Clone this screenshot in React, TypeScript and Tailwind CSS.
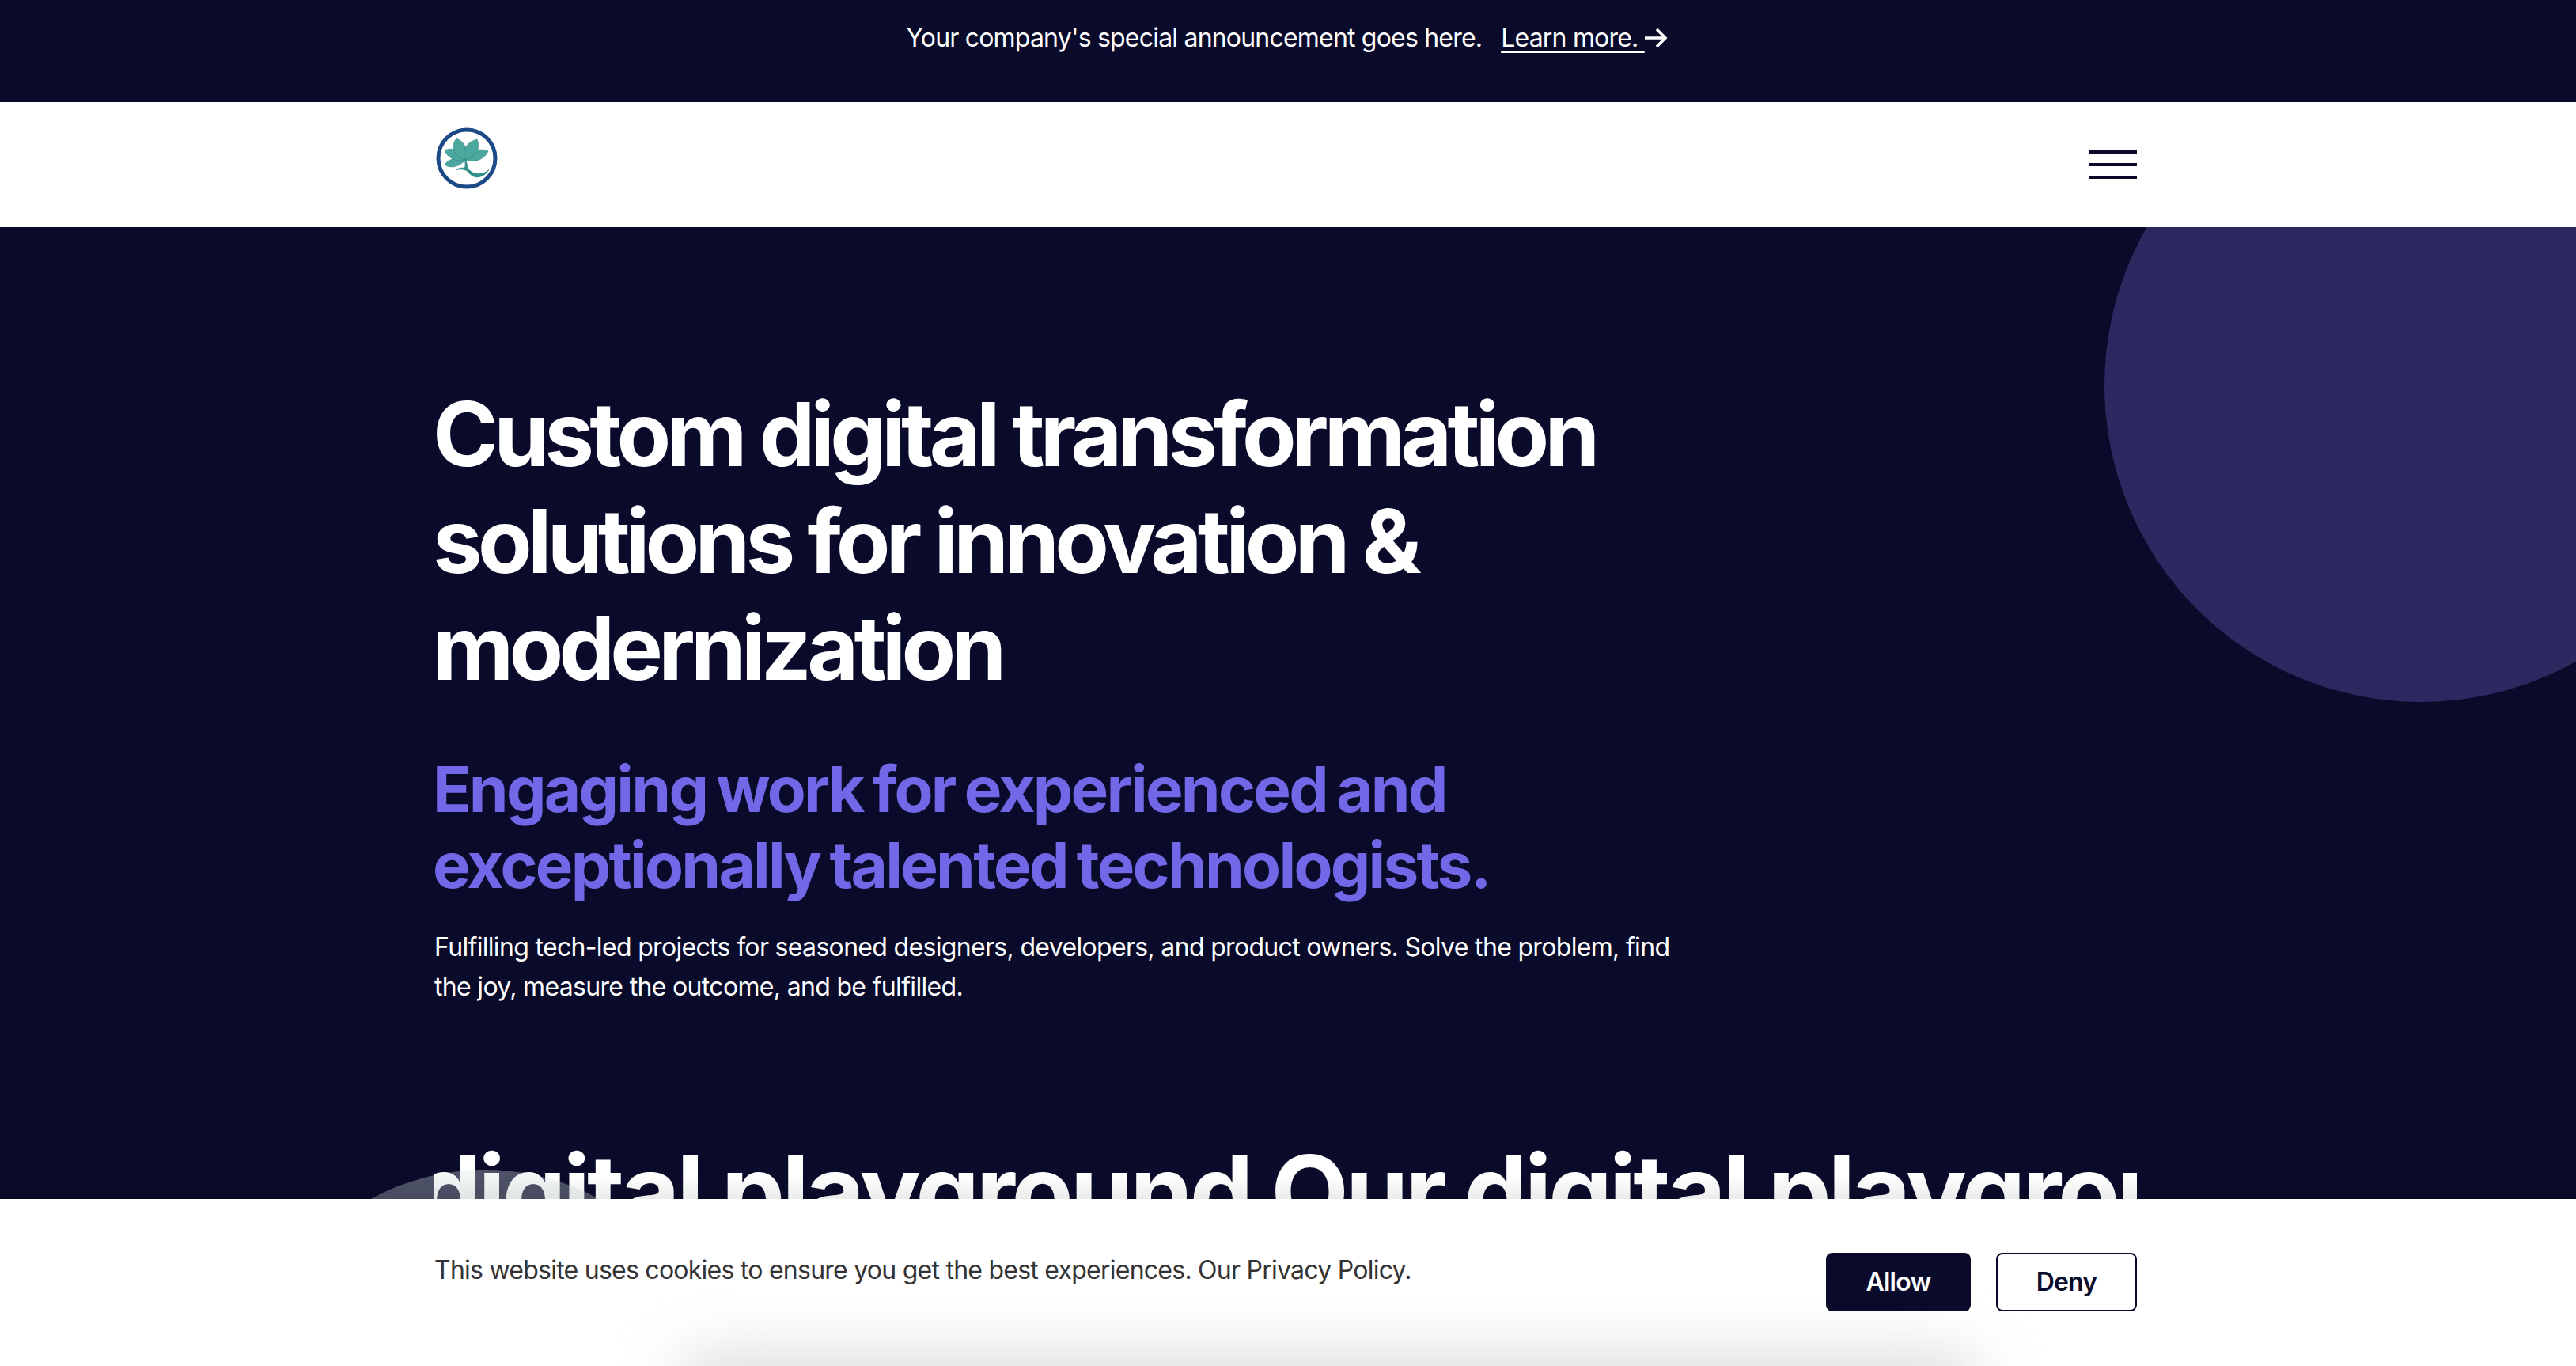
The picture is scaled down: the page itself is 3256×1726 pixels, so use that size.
import React from "react";

function Logo() {
  return (
    <svg width="80" height="80" viewBox="0 0 80 80" aria-label="logo" className="ml-[1px]">
      <circle cx="40" cy="40" r="36" fill="#fff" stroke="#1c4a86" strokeWidth="5" />
      <g fill="#4aa89f" stroke="#2f7f7a" strokeWidth="0.5">
        <path d="M12 48 C18 40 28 38 38 42 C32 50 20 54 12 48Z" />
        <path d="M12 30 C22 25 34 31 38 42 C27 45 16 40 12 30Z" />
        <path d="M67 31 C56 26 43 31 38 42 C50 46 62 42 67 31Z" />
        <path d="M27 15 C19 24 24 38 38 42 C42 30 38 19 27 15Z" />
        <path d="M53 16 C58 27 52 39 38 42 C33 29 41 19 53 16Z" />
      </g>
      <path d="M37 42 C38 47 38 50 37 52 C33 51 29 52 26 55 C31 54 36 54 40 56 C44 61 49 65 55 64 C61 63 66 59 69 53 C64 58 58 60 52 59 C47 58 43 55 41 52 C41 48 40 45 39 42Z" fill="#2f8f8a" />
    </svg>
  );
}

export default function App() {
  return (
    <div className="relative h-[1726px] w-full overflow-hidden bg-[#0a0b2b] font-['Inter',sans-serif] text-white">
      <div className="flex h-[129px] items-center justify-center pb-[34px] pr-[3px] text-[32px] leading-[48px] tracking-[-0.025em]">
        <span>Your company's special announcement goes here.</span>
        <a className="ml-[24px] flex items-center">
          <span className="underline underline-offset-[5px] whitespace-pre">Learn more. </span>
          <svg width="29" height="26" viewBox="0 0 29 26" fill="none" stroke="#fff" strokeWidth="3.6">
            <path d="M0 13H26M15 2l11 11-11 11" />
          </svg>
        </a>
      </div>

      <header className="flex h-[158px] items-start justify-between bg-white pl-[549px] pr-[555px] pt-[31px]">
        <Logo />
        <button className="mt-[30px] flex h-[36px] w-[60px] flex-col justify-between">
          <span className="h-[4px] w-full bg-[#0a0b2b]" />
          <span className="h-[4px] w-full bg-[#0a0b2b]" />
          <span className="h-[4px] w-full bg-[#0a0b2b]" />
        </button>
      </header>

      <main className="relative h-[1439px] overflow-hidden">
        <div className="absolute left-[2660px] top-[-200px] h-[800px] w-[800px] rounded-full bg-[#2c2960]" />
        <div className="relative pl-[549px] pr-[555px] pt-[194px]">
          <h1 className="ml-[-2px] w-[1700px] text-[112px] font-bold leading-[135px] tracking-[-0.051em]">
            Custom digital transformation solutions for innovation &amp; modernization
          </h1>
          <h2 className="ml-[-2px] mt-[63px] w-[1500px] text-[80px] font-bold leading-[96px] tracking-[-0.034em] [word-spacing:-4px] text-[#7267e6]">
            Engaging work for experienced and exceptionally talented technologists.
          </h2>
          <p className="mt-[31px] w-[1600px] text-[32px] leading-[50px] tracking-[-0.021em]">
            Fulfilling tech-led projects for seasoned designers, developers, and product owners. Solve the problem, find the joy, measure the outcome, and be fulfilled.
          </p>
          <div className="mt-[157px] overflow-hidden whitespace-nowrap text-[128px] font-bold leading-[154px] tracking-[-0.033em]">
            <span className="ml-[-265px]">Our digital playground Our digital playground</span>
          </div>
        </div>
        <div className="absolute left-[313px] top-[1191px] h-[600px] w-[600px] rounded-full bg-[#dae3e354]" />
      </main>

      <div className="absolute inset-x-0 bottom-0 h-[211px] overflow-hidden bg-white">
        <div className="absolute left-[860px] top-[205px] h-[60px] w-[1640px] rounded-[30px] bg-[#cfcfcf] blur-[40px]" />
        <div className="relative flex h-full items-start justify-between pl-[549px] pr-[555px] pt-[65px]">
          <p className="text-[32px] leading-[50px] tracking-[-0.0235em] text-[#333333]">
            This website uses cookies to ensure you get the best experiences. Our Privacy Policy.
          </p>
          <div className="mt-[3px] flex gap-[32px]">
            <button className="h-[74px] w-[183px] rounded-[8px] bg-[#0a0b2b] text-[32px] font-semibold tracking-[-0.025em] text-white">Allow</button>
            <button className="h-[74px] w-[178px] rounded-[8px] border-2 border-[#0a0b2b] bg-white text-[32px] font-semibold tracking-[-0.025em] text-[#0a0b2b]">Deny</button>
          </div>
        </div>
      </div>
      <div className="pointer-events-none absolute inset-x-0 bottom-[211px] h-[30px] bg-gradient-to-t from-[#00000014] to-transparent" />
    </div>
  );
}
